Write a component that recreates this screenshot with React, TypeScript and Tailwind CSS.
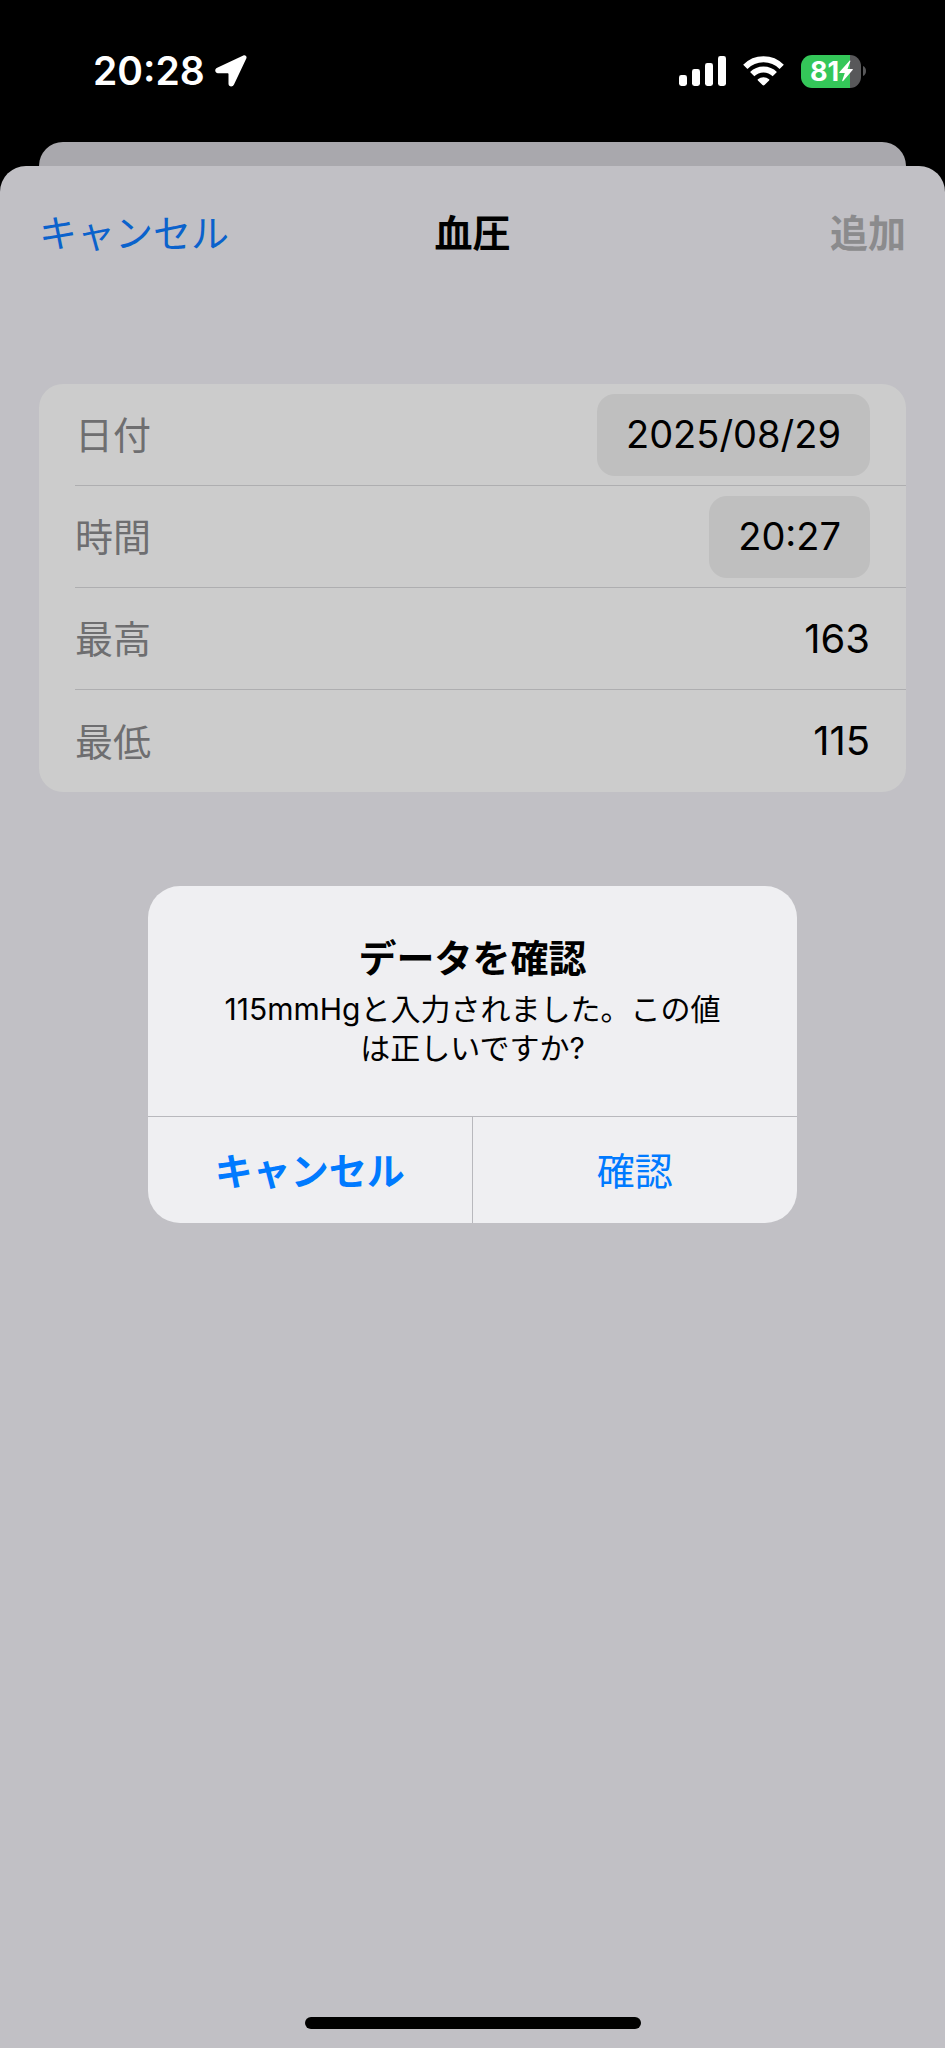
import React from "react";

const FONT = "font-['Inter','Noto_Sans_CJK_JP',sans-serif]";

function LocationArrow() {
  return (
    <svg className="h-8 w-8" viewBox="0 0 32 32" fill="#fff" aria-hidden="true">
      <path d="M28.3.5 2.2 12.7C-.9 14.2-.1 18.2 3 18.2h9.8c.4 0 .7.3.7.7v9.9c0 3.2 4.2 3.8 5.5.8L31.3 3.6C32.2 1.500 30.400-.5 28.300.5Z" />
    </svg>
  );
}

function SignalBars() {
  return (
    <svg className="h-[30px] w-[47px]" viewBox="0 0 47 30" fill="#fff" aria-hidden="true">
      <rect x="0" y="19" width="8" height="11" rx="2.4" />
      <rect x="13" y="13" width="8" height="17" rx="2.4" />
      <rect x="26" y="7" width="8" height="23" rx="2.4" />
      <rect x="39" y="0" width="8" height="30" rx="2.4" />
    </svg>
  );
}

function Wifi() {
  return (
    <svg className="h-[30px] w-[41px]" viewBox="0 0 41 30" aria-hidden="true">
      <g fill="none" stroke="#fff" strokeWidth="6">
        <path d="M2.300 10.800A25.600 25.600 0 0 1 38.700 10.800" />
        <path d="M9.200 18.200A16 16 0 0 1 31.800 18.200" />
      </g>
      <path fill="#fff" d="M20.500 29.600c-.4 0-.7-.2-1-.5l-4.600-4.600c-.4-.4-.4-.9 0-1.300a8.600 8.600 0 0 1 11.200 0c.4.400.4.900 0 1.300l-4.600 4.600c-.3.300-.6.500-1 .5Z" />
    </svg>
  );
}

function Battery() {
  return (
    <div className="flex items-center gap-[2px]" role="img" aria-label="81%">
      <div className="flex h-[33px] w-[60px] items-center justify-center overflow-hidden rounded-[11px] bg-[linear-gradient(to_right,#34c759_81%,#58585a_81%)] pl-[1px] text-[27px] leading-[33px] font-bold text-white">
        <span>81</span>
        <svg className="h-[22px] w-[14px]" viewBox="0 0 14 21" fill="#fff" aria-hidden="true">
          <path d="M10.300.4.500 11.400c-.4.500-.2 1 .4 1h4.900L3.300 19.700c-.3.900.5 1.300 1.100.6L13.600 9.500c.4-.5.200-1-.4-1H8.500L11.300 1.100c.3-.9-.4-1.400-1-.7Z" />
        </svg>
      </div>
      <svg className="h-[10px] w-[3px]" viewBox="0 0 3 10" fill="#58585a" aria-hidden="true">
        <path d="M0 0c2 .8 3 2.700 3 5s-1 4.200-3 5Z" />
      </svg>
    </div>
  );
}

function Row({ id, label, last, children }: { id: string; label: string; last?: boolean; children: React.ReactNode }) {
  return (
    <div
      className={
        last
          ? "ml-9 flex h-[102px] items-center justify-between pr-9"
          : "ml-9 flex h-[102px] items-center justify-between border-b border-[#aeaeb0] pr-9"
      }
    >
      <label htmlFor={id} className="pt-[2px] text-[38px] text-[#6e6e70]">
        {label}
      </label>
      {children}
    </div>
  );
}

export default function App() {
  return (
    <div className={`relative flex min-h-screen flex-col bg-black text-black ${FONT}`}>
      <header className="flex h-[142px] items-center justify-between pr-[79px] pl-[93px] text-white">
        <div className="flex items-center gap-[10px]">
          <span className="text-[39px] leading-[48px] font-semibold">20:28</span>
          <LocationArrow />
        </div>
        <div className="flex items-center gap-[17px]">
          <SignalBars />
          <Wifi />
          <Battery />
        </div>
      </header>

      <div className="mx-[39px] h-6 rounded-t-[24px] bg-[#a9a8ad]" />

      <main className="flex grow flex-col rounded-t-[26px] bg-[#c1c0c5]">
        <nav className="grid h-[134px] grid-cols-3 items-center px-[39px] text-[38px]">
          <button type="button" className="justify-self-start text-[#0a62cc]">
            キャンセル
          </button>
          <h1 className="justify-self-center font-bold">血圧</h1>
          <button type="button" disabled className="justify-self-end font-bold text-[#8b8b8d]">
            追加
          </button>
        </nav>

        <form className="mx-[39px] mt-[84px] rounded-[24px] bg-[#cccccc]">
          <Row id="date" label="日付">
            <button id="date" type="button" className="h-[82px] rounded-[18px] bg-[#bfbfbf] px-[29px] text-[38px]">
              2025/08/29
            </button>
          </Row>
          <Row id="time" label="時間">
            <button id="time" type="button" className="h-[82px] rounded-[18px] bg-[#bfbfbf] px-[29px] text-[38px]">
              20:27
            </button>
          </Row>
          <Row id="systolic" label="最高">
            <input id="systolic" inputMode="numeric" defaultValue="163" className="w-60 bg-transparent text-right text-[40px] outline-none" />
          </Row>
          <Row id="diastolic" label="最低" last>
            <input id="diastolic" inputMode="numeric" defaultValue="115" className="w-60 bg-transparent text-right text-[40px] outline-none" />
          </Row>
        </form>

        <div className="mt-auto flex justify-center pb-[19px]">
          <div className="h-3 w-[336px] rounded-full bg-black" />
        </div>
      </main>

      <div className="absolute inset-0 flex items-center justify-center pt-[60px]">
        <div
          role="alertdialog"
          aria-labelledby="alert-title"
          aria-describedby="alert-text"
          className="w-[649px] overflow-hidden rounded-[32px] bg-[#efeff2]"
        >
          <div className="px-[68px] pt-12 pb-12 text-center">
            <h2 id="alert-title" className="text-[38px] leading-[48px] font-bold">
              データを確認
            </h2>
            <p id="alert-text" className="mt-2 text-[30px] leading-[39px]">
              115mmHgと入力されました。この値は正しいですか?
            </p>
          </div>
          <div className="grid grid-cols-2 border-t border-[#b8b8bd] text-[38px] text-[#007aff]">
            <button type="button" className="h-[106px] border-r border-[#b8b8bd] pt-1 font-bold">
              キャンセル
            </button>
            <button type="button" className="h-[106px] pt-1">
              確認
            </button>
          </div>
        </div>
      </div>
    </div>
  );
}
